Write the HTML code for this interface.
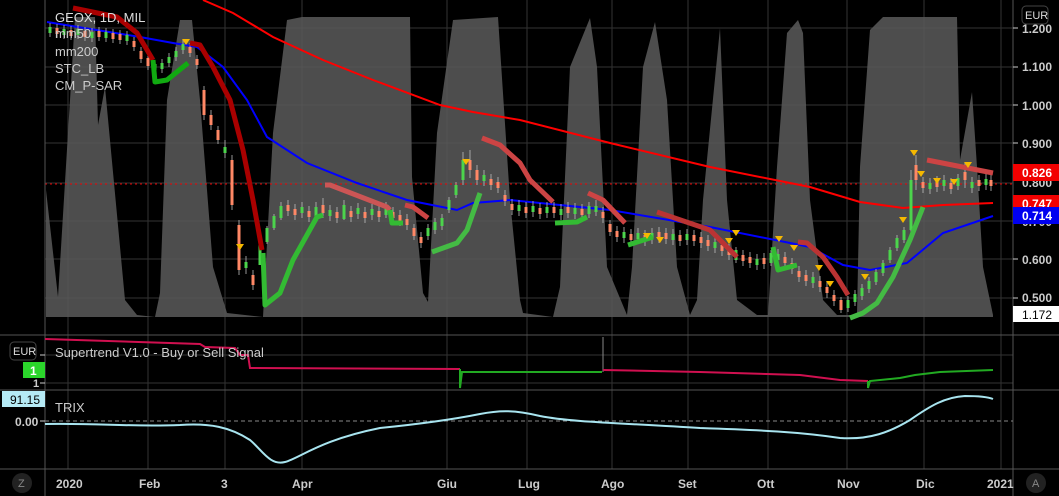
<!DOCTYPE html>
<html><head><meta charset="utf-8"><style>
html,body{margin:0;padding:0;background:#000;width:1059px;height:496px;overflow:hidden;font-family:"Liberation Sans",sans-serif}
svg{position:absolute;left:0;top:0}
</style></head><body>
<svg width="1059" height="496" viewBox="0 0 1059 496" xmlns="http://www.w3.org/2000/svg" font-family="Liberation Sans, sans-serif">
<g stroke="#333" stroke-width="1">
<line x1="68" y1="0" x2="68" y2="469"/><line x1="148" y1="0" x2="148" y2="469"/><line x1="225" y1="0" x2="225" y2="469"/><line x1="302" y1="0" x2="302" y2="469"/><line x1="447" y1="0" x2="447" y2="469"/><line x1="527" y1="0" x2="527" y2="469"/><line x1="612" y1="0" x2="612" y2="469"/><line x1="688" y1="0" x2="688" y2="469"/><line x1="768" y1="0" x2="768" y2="469"/><line x1="847" y1="0" x2="847" y2="469"/><line x1="924" y1="0" x2="924" y2="469"/><line x1="1001" y1="0" x2="1001" y2="469"/>
<line x1="45" y1="28" x2="1013" y2="28"/><line x1="45" y1="67" x2="1013" y2="67"/><line x1="45" y1="105" x2="1013" y2="105"/><line x1="45" y1="143" x2="1013" y2="143"/><line x1="45" y1="183" x2="1013" y2="183"/><line x1="45" y1="221" x2="1013" y2="221"/><line x1="45" y1="259" x2="1013" y2="259"/><line x1="45" y1="298" x2="1013" y2="298"/>
<line x1="45" y1="355" x2="1013" y2="355"/><line x1="45" y1="383" x2="1013" y2="383"/>
</g>
<polygon fill="#5a5a5a" fill-opacity="0.85" points="46,190 58,297 70,100 75,17 95,17 98,125 105,87 125,300 137,315 155,317 160,293 167,100 180,20 192,20 200,100 213,267 227,313 263,317 273,133 287,20 302,17 410,17 412,177 423,293 428,302 437,133 453,20 498,17 510,200 520,300 523,313 553,317 560,287 570,67 590,18 597,67 607,267 627,315 632,267 643,67 655,22 667,100 677,267 690,315 697,300 703,200 720,28 727,200 737,300 757,315 768,315 777,167 787,33 798,20 803,33 810,200 823,300 837,315 857,315 860,167 870,30 883,17 957,17 960,160 972,92 977,167 983,267 993,315 993,317 46,317"/>
<line x1="45" y1="184" x2="1013" y2="184" stroke="#e00" stroke-dasharray="2,3" stroke-width="1"/>
<polyline fill="none" stroke="#f00" stroke-width="2" points="203,0 233,13 273,37 323,60 373,80 440,105 473,112 520,120 610,143 710,167 810,187 860,202 903,208 943,205 993,203"/>
<polyline fill="none" stroke="#00f" stroke-width="2" points="47,22 140,37 173,43 197,47 223,67 247,100 267,137 307,163 357,183 407,200 457,210 473,203 510,200 610,210 710,227 810,247 843,265 870,270 907,263 943,233 993,216"/>
<path fill="none" stroke="#bbb" stroke-width="0.8" d="M50,23V37M57,24V38M64,25V39M71,26V40M78,25V39M85,27V41M92,28V42M99,27V41M106,28V42M113,29V43M120,30V44M127,31V45M134,37V51M141,47V63M148,54V70M155,60V74M162,59V73M169,53V67M176,47V61M183,40V54M190,43V57M197,55V69M204,86V120M211,110V130M218,126V144M225,140V158M232,155V210M239,220V275M246,256V274M253,270V290M260,246V264M267,226V244M274,214V230M281,202V220M288,200V216M295,204V220M302,202V218M309,206V222M316,202V222M323,198V218M330,205V221M337,207V223M344,200V220M351,206V222M358,203V219M365,207V223M372,204V220M379,206V222M386,202V218M393,207V223M400,210V226M407,214V230M414,224V240M421,232V248M428,224V240M435,218V234M442,214V230M449,197V213M456,182V198M463,152V185M470,150V178M477,165V185M484,170V186M491,174V190M498,177V193M505,190V206M512,199V215M519,200V216M526,202V218M533,201V217M540,203V219M547,202V218M554,202V218M561,204V220M568,202V218M575,203V219M582,204V220M589,202V218M596,200V216M603,207V223M610,220V236M617,226V242M624,227V243M631,229V245M638,228V244M645,230V246M652,228V244M659,227V243M666,228V244M673,229V245M680,230V246M687,229V245M694,230V246M701,232V248M708,235V251M715,237V253M722,240V256M729,244V260M736,247V263M743,250V266M750,252V268M757,254V270M764,253V269M771,250V266M778,249V265M785,252V268M792,258V274M799,266V282M806,270V286M813,272V288M820,276V292M827,282V298M834,290V306M841,297V313M848,296V312M855,290V306M862,284V300M869,277V293M876,269V285M883,260V276M890,247V263M897,235V251M904,227V243M911,170V235M916,155V190M923,177V193M930,178V194M937,176V192M944,175V191M951,178V194M958,174V190M965,162V188M972,177V193M979,175V191M986,174V190M991,175V191"/>
<path fill="none" stroke="#4cd44c" stroke-width="3" d="M50,27V33M64,29V35M78,29V35M92,32V38M106,32V38M127,35V41M155,64V70M162,63V69M169,57V63M176,51V57M183,44V50M225,147V153M246,262V268M260,245V265M267,228V242M274,216V228M281,206V218M302,207V213M316,207V217M330,210V216M344,205V219M358,208V214M372,209V215M386,205V215M428,228V236M435,222V230M442,218V226M449,200V210M456,185V195M463,160V180M484,175V181M519,205V211M533,206V212M547,207V213M561,209V215M575,208V214M589,206V214M596,206V212M624,232V238M638,233V239M652,233V239M673,234V240M687,234V240M715,242V248M736,250V260M757,259V265M771,253V263M778,254V260M813,277V283M848,300V308M855,294V302M862,288V296M869,281V289M876,272V282M883,263V273M890,250V260M897,238V248M904,230V240M911,180V230M930,183V189M944,180V186M958,178V186M972,182V188M986,179V185"/>
<path fill="none" stroke="#ff8866" stroke-width="3" d="M57,28V34M71,30V36M85,31V37M99,31V37M113,33V39M120,34V40M134,41V47M141,51V59M148,58V66M190,47V53M197,59V65M204,90V115M211,115V125M218,130V140M232,160V205M239,225V270M253,275V285M288,205V211M295,209V215M309,211V217M323,205V213M337,212V218M351,211V217M365,212V218M379,211V217M393,212V218M400,215V221M407,219V225M414,228V236M421,237V243M470,160V170M477,170V180M491,179V185M498,182V188M505,195V201M512,204V210M526,207V213M540,208V214M554,207V213M568,207V213M582,209V215M603,212V218M610,224V232M617,231V237M631,234V240M645,235V241M659,232V238M666,233V239M680,235V241M694,235V241M701,237V243M708,240V246M722,245V251M729,249V255M743,255V261M750,257V263M764,258V264M785,257V263M792,263V269M799,271V277M806,275V281M820,281V287M827,287V293M834,295V301M841,300V310M916,165V180M923,182V188M937,181V187M951,183V189M965,172V180M979,180V186M991,180V186"/>
<g fill="none" stroke-width="5" stroke-linejoin="round">
<polyline stroke="#a00" points="73,8 117,17 137,33 153,60"/>
<polyline stroke="#1a1" points="153,60 155,82 167,80 188,63"/>
<polyline stroke="#a00" points="190,43 200,45 213,67 230,100 243,150 253,200 262,250"/>
<polyline stroke="#3b3" points="263,253 265,305 280,293 293,260 317,217 323,215"/>
<polyline stroke="#c55" points="325,185 330,185 387,207 390,210"/>
<polyline stroke="#3b3" points="390,210 392,223 403,223"/>
<polyline stroke="#c44" points="405,205 413,207 428,218"/>
<polyline stroke="#4b4" points="432,252 457,243 467,230 480,193"/>
<polyline stroke="#c44" points="482,138 500,145 520,163 530,180 553,202"/>
<polyline stroke="#3b3" points="555,223 577,222 587,217"/>
<polyline stroke="#c44" points="588,193 603,200 625,223"/>
<polyline stroke="#3b3" points="628,245 653,237"/>
<polyline stroke="#b33" points="657,212 710,230 737,257"/>
<polyline stroke="#3b3" points="773,247 778,270 797,265"/>
<polyline stroke="#b33" points="798,242 807,243 823,257 837,277 848,295"/>
<polyline stroke="#4b4" points="850,318 863,313 877,303 893,277 910,240 923,207"/>
<polyline stroke="#c44" points="927,160 993,173"/>
</g>
<g fill="#f5b800">
<polygon points="182,39 190,39 186,45"/><polygon points="236,244 244,244 240,250"/><polygon points="462,159 470,159 466,165"/><polygon points="643,233 651,233 647,239"/><polygon points="656,237 664,237 660,243"/><polygon points="732,230 740,230 736,236"/><polygon points="725,238 733,238 729,244"/><polygon points="775,236 783,236 779,242"/><polygon points="790,245 798,245 794,251"/><polygon points="815,265 823,265 819,271"/><polygon points="826,281 834,281 830,287"/><polygon points="861,274 869,274 865,280"/><polygon points="899,217 907,217 903,223"/><polygon points="910,150 918,150 914,156"/><polygon points="917,171 925,171 921,177"/><polygon points="950,179 958,179 954,185"/><polygon points="964,162 972,162 968,168"/><polygon points="933,178 941,178 937,184"/>
</g>
<line x1="0" y1="335" x2="1059" y2="335" stroke="#555"/>
<line x1="0" y1="390" x2="1059" y2="390" stroke="#555"/>
<line x1="0" y1="469" x2="1059" y2="469" stroke="#555"/>
<line x1="45" y1="0" x2="45" y2="496" stroke="#555"/>
<line x1="1013" y1="0" x2="1013" y2="496" stroke="#555"/>
<polyline fill="none" stroke="#d01050" stroke-width="2" points="45,339 200,344 205,347 235,348 240,355 248,355 250,368 460,369"/>
<polyline fill="none" stroke="#2a2" stroke-width="2" points="460,369 460,388 462,372 602,372"/>
<line x1="603" y1="337" x2="603" y2="372" stroke="#888"/>
<polyline fill="none" stroke="#d01050" stroke-width="2" points="603,370 700,372 800,375 840,380 868,381"/>
<polyline fill="none" stroke="#2a2" stroke-width="2" points="868,381 868,388 870,381 900,378 915,375 940,372 993,370"/>
<line x1="45" y1="421" x2="1013" y2="421" stroke="#888" stroke-dasharray="4,3"/>
<path fill="none" stroke="#a8e4ef" stroke-width="2" d="M45,424 C100,423 130,427 180,425 C210,423 230,427 250,440 C262,450 270,466 285,462 C300,458 320,440 380,428 C420,424 450,420 480,414 C500,410 515,410 540,416 C570,422 620,423 700,428 C760,430 800,432 840,438 C870,440 890,432 910,420 C930,406 945,397 965,396 C980,396 988,397 993,399"/>
<g font-size="13">
<text x="55" y="22" fill="#ddd">GEOX, 1D, MIL</text>
<text x="55" y="38" fill="#ccc">mm50</text>
<text x="55" y="56" fill="#ccc">mm200</text>
<text x="55" y="73" fill="#ccc">STC_LB</text>
<text x="55" y="90" fill="#ccc">CM_P-SAR</text>
<text x="55" y="357" fill="#ccc">Supertrend V1.0 - Buy or Sell Signal</text>
<text x="55" y="412" fill="#ccc">TRIX</text>
</g>
<g fill="#ccc" font-size="12" font-weight="bold">
<text x="1022" y="33">1.200</text><text x="1022" y="71">1.100</text><text x="1022" y="110">1.000</text><text x="1022" y="148">0.900</text><text x="1022" y="187">0.800</text><text x="1022" y="226">0.700</text><text x="1022" y="264">0.600</text><text x="1022" y="302">0.500</text>
<text x="15" y="426">0.00</text>
<text x="56" y="488">2020</text><text x="139" y="488">Feb</text><text x="221" y="488">3</text><text x="292" y="488">Apr</text><text x="437" y="488">Giu</text><text x="518" y="488">Lug</text><text x="601" y="488">Ago</text><text x="678" y="488">Set</text><text x="757" y="488">Ott</text><text x="837" y="488">Nov</text><text x="916" y="488">Dic</text><text x="987" y="488">2021</text>
</g>
<g stroke="#ccc"><line x1="1013" y1="28" x2="1018" y2="28"/><line x1="1013" y1="67" x2="1018" y2="67"/><line x1="1013" y1="105" x2="1018" y2="105"/><line x1="1013" y1="143" x2="1018" y2="143"/><line x1="1013" y1="221" x2="1018" y2="221"/><line x1="1013" y1="259" x2="1018" y2="259"/><line x1="1013" y1="298" x2="1018" y2="298"/><line x1="40" y1="355" x2="45" y2="355"/><line x1="40" y1="383" x2="45" y2="383"/><line x1="40" y1="421" x2="45" y2="421"/></g>
<rect x="1022" y="6" width="26" height="18" rx="4" fill="#000" stroke="#444"/>
<text x="1025" y="19" fill="#ddd" font-size="11">EUR</text>
<rect x="10" y="342" width="26" height="18" rx="4" fill="#000" stroke="#444"/>
<text x="13" y="355" fill="#ddd" font-size="11">EUR</text>
<rect x="1013" y="164" width="46" height="17" fill="#f20000"/><text x="1022" y="177" fill="#fff" font-size="12" font-weight="bold">0.826</text>
<rect x="1013" y="195" width="46" height="17" fill="#f20000"/><text x="1022" y="208" fill="#fff" font-size="12" font-weight="bold">0.747</text>
<rect x="1013" y="207" width="46" height="17" fill="#0000f0"/><text x="1022" y="220" fill="#fff" font-size="12" font-weight="bold">0.714</text>
<rect x="1013" y="306" width="46" height="16" fill="#fff"/><text x="1022" y="319" fill="#000" font-size="12">1.172</text>
<rect x="23" y="362" width="22" height="16" fill="#2bd62b"/><text x="30" y="375" fill="#fff" font-size="12" font-weight="bold">1</text>
<text x="33" y="387" fill="#ccc" font-size="11" font-weight="bold">1</text>
<rect x="2" y="391" width="43" height="16" fill="#b5eaf5"/><text x="10" y="404" fill="#000" font-size="12">91.15</text>
<circle cx="22" cy="483" r="10" fill="#222"/><text x="18" y="487" fill="#888" font-size="11">Z</text>
<circle cx="1036" cy="483" r="10" fill="#222"/><text x="1032" y="487" fill="#888" font-size="11">A</text>
</svg>
</body></html>
